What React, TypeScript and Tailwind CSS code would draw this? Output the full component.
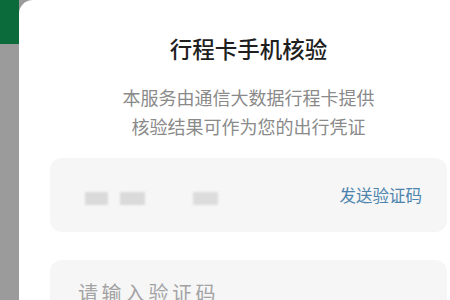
export default function App() {
  return (
    <div
      className="flex h-[300px] w-[450px] overflow-hidden bg-[#9b9b9b]"
      style={{ fontFamily: '"Noto Sans CJK SC", "Noto Sans", sans-serif' }}
    >
      <div className="w-[19px] shrink-0">
        <div className="h-[44px] bg-[#0b6b3a]" />
      </div>

      <div className="w-[459px] shrink-0 rounded-tl-[14px] bg-white px-[31px] pt-[33px]">
        <h1 className="text-center text-[22.5px] leading-[30px] font-medium text-[#1f1f1f]">
          行程卡手机核验
        </h1>
        <p className="mt-[20px] text-center text-[18px] leading-[29px] text-[#8a8a8a]">
          本服务由通信大数据行程卡提供
          <br />
          核验结果可作为您的出行凭证
        </p>

        <div className="mt-[17px] flex h-[74px] items-center rounded-[12px] bg-[#f6f6f7] pl-[35px] pr-[25px]">
          <div className="flex items-center pt-[6px]">
            <span className="h-[13px] w-[23px] bg-[#dadada] blur-[0.8px]" />
            <span className="ml-[12px] h-[13px] w-[25px] bg-[#dadada] blur-[0.8px]" />
            <span className="ml-[48px] h-[13px] w-[25px] bg-[#dcdcdc] blur-[0.8px]" />
          </div>
          <button type="button" className="ml-auto text-[16.5px] leading-[24px] text-[#4d84ad]">
            发送验证码
          </button>
        </div>

        <div className="mt-[28px] h-[74px] rounded-[12px] bg-[#f6f6f7] pl-[28px] pt-[20px]">
          <span className="text-[20px] leading-[26px] tracking-[3.5px] text-[#a3a3a3]">请输入验证码</span>
        </div>
      </div>
    </div>
  );
}
